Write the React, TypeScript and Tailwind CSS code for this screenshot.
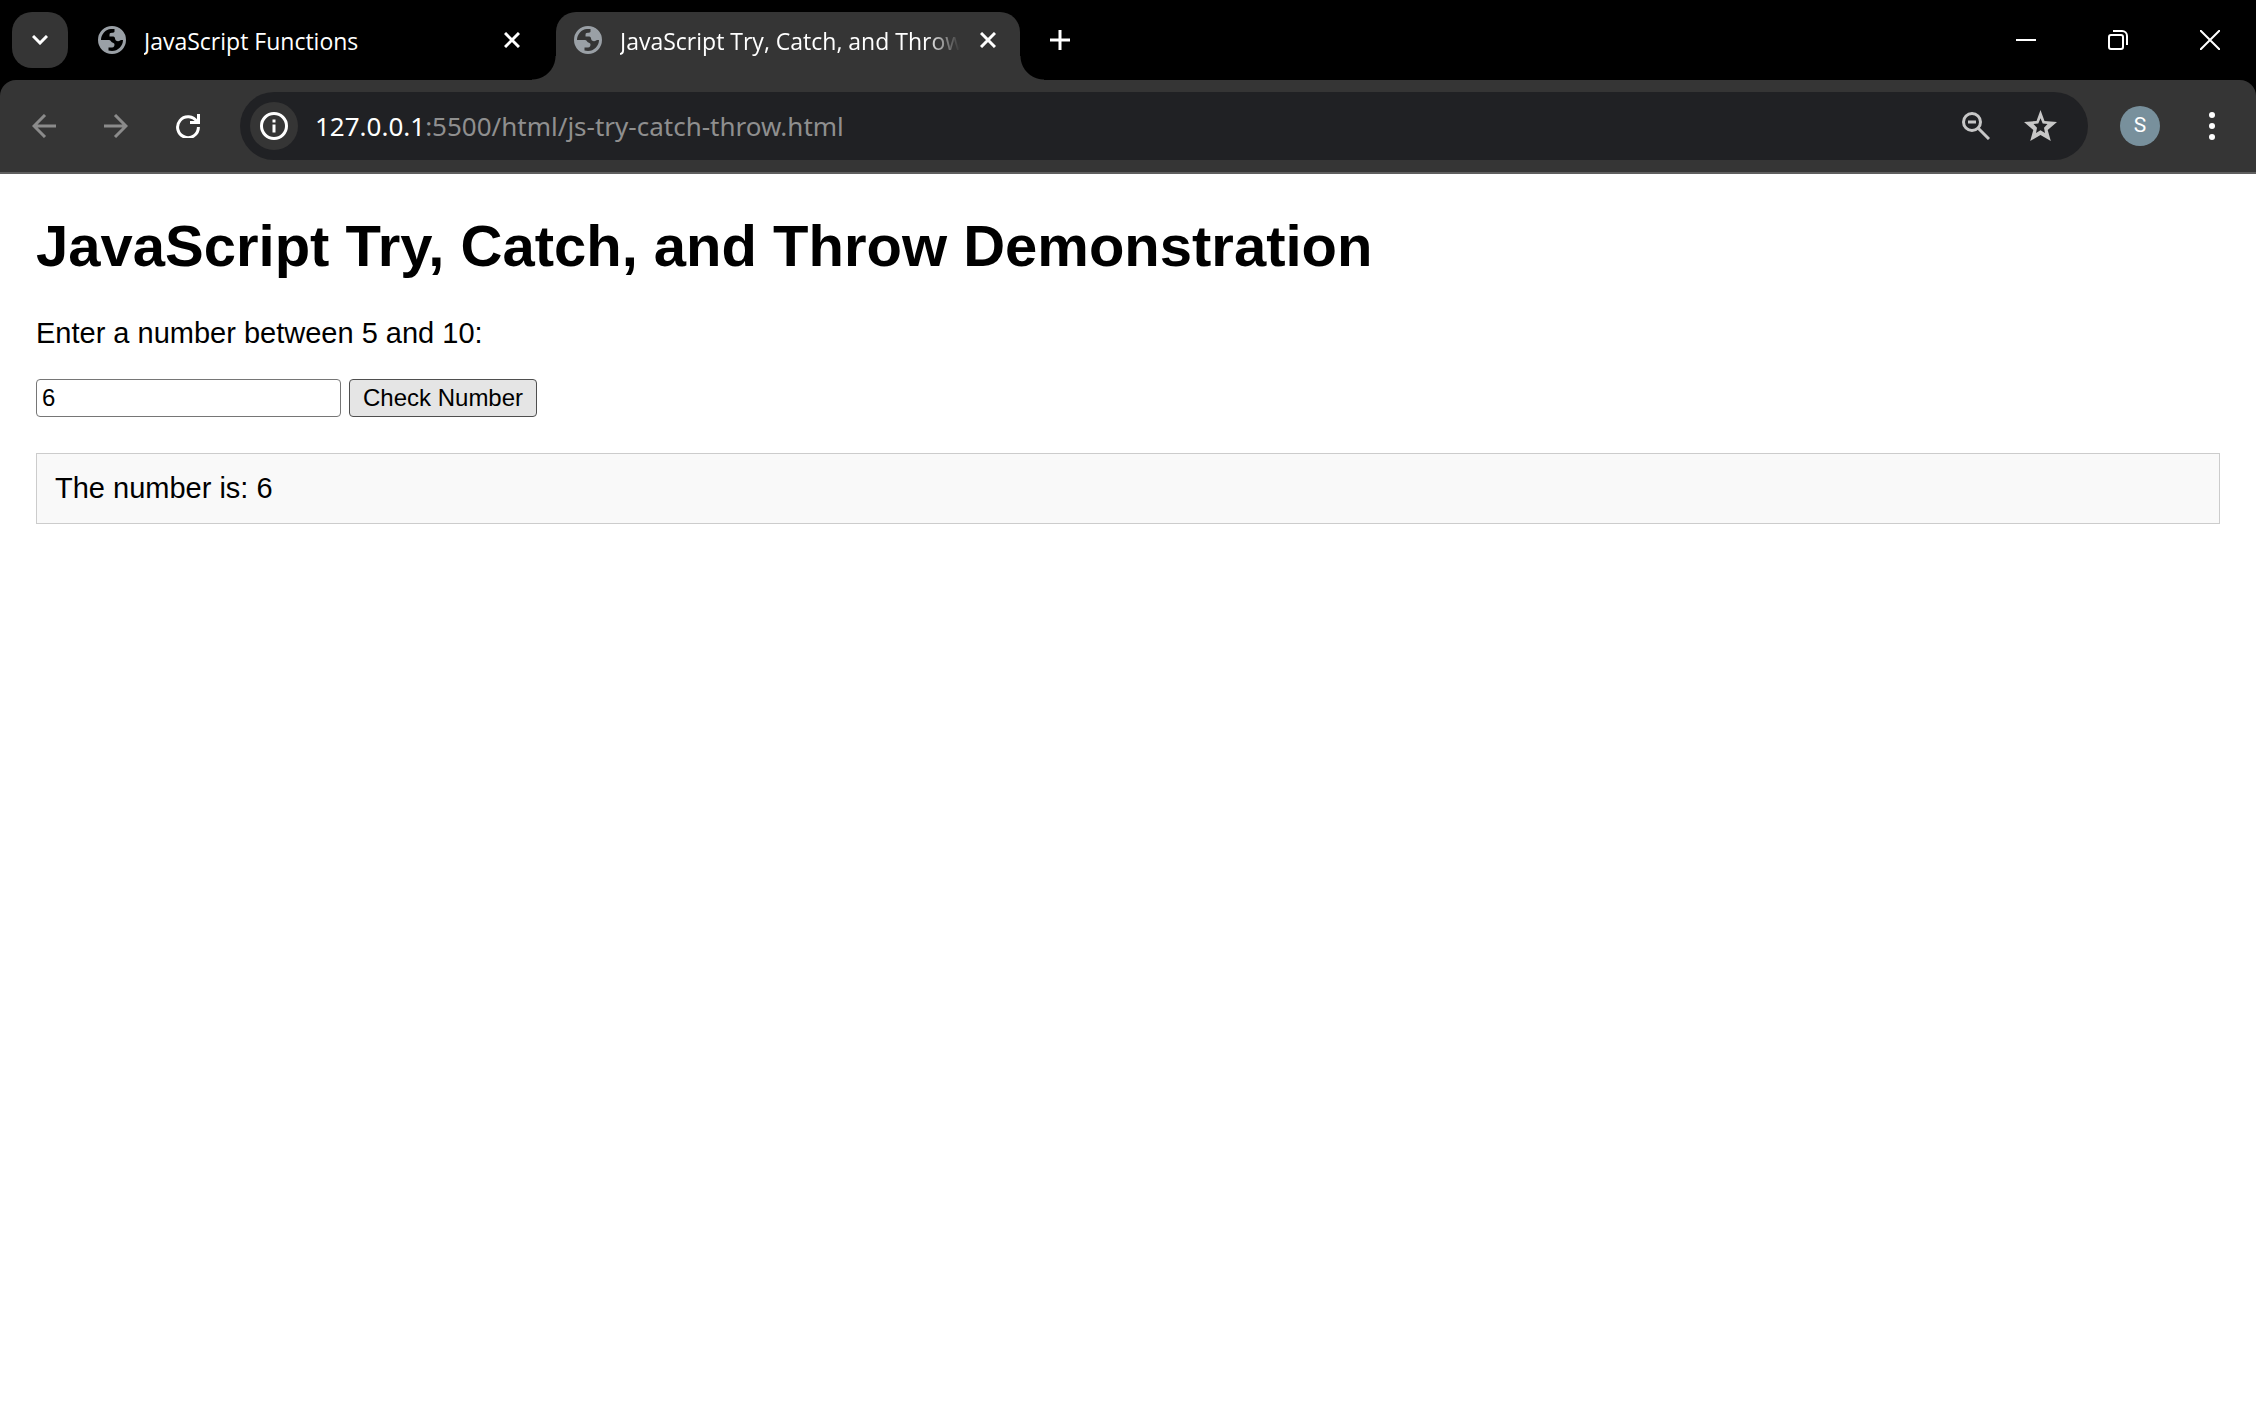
import { useState, type ReactNode } from "react";

function Globe() {
  return (
    <svg viewBox="0 0 28 28" className="size-7 shrink-0" fill="#9aa0a6" aria-hidden="true">
      <path
        fillRule="evenodd"
        d="M14 0a14 14 0 1 0 0 28a14 14 0 0 0 0-28zM3 14C3 8.500 7.500 3.200 13 3H16.500V5.500C16.500 7 14 6.700 12.500 7C11.500 7.300 11.500 8 11.500 10.500H14.500C17 10.500 17 12 17.300 13.500C17.800 15.500 21 15.500 22 14.500C22.500 14 23.500 14 25 14C25 20 20 25 14 25C12.500 25 11.500 24.800 10.500 24.500V21.500H14C16 21.500 16.500 20 16.500 18.500C16.500 17 14.500 17 13.500 16C12.700 15 12.700 14 11 14H3z"
      />
    </svg>
  );
}

function CloseTab({ label }: { label: string }) {
  return (
    <button type="button" aria-label={label} className="grid size-8 shrink-0 place-items-center">
      <svg viewBox="0 0 16 16" className="size-4" stroke="#fff" strokeWidth="3" aria-hidden="true">
        <path d="M1 1L15 15M15 1L1 15" />
      </svg>
    </button>
  );
}

function IconButton({ label, children }: { label: string; children: ReactNode }) {
  return (
    <button type="button" aria-label={label} className="grid size-14 shrink-0 place-items-center">
      {children}
    </button>
  );
}

function WindowButton({ label, children }: { label: string; children: ReactNode }) {
  return (
    <button type="button" aria-label={label} className="grid h-20 w-[92px] place-items-center">
      <svg viewBox="0 0 20 20" className="size-5" fill="none" stroke="#fff" strokeWidth="2" aria-hidden="true">
        {children}
      </svg>
    </button>
  );
}

function TabStrip() {
  return (
    <div className="flex h-20 items-end bg-black text-[23px] text-white">
      <div className="flex h-20 min-w-0 items-center pl-3">
        <button
          type="button"
          aria-label="Search tabs"
          className="grid size-14 place-items-center rounded-[20px] bg-[#353535]"
        >
          <svg viewBox="0 0 16 10" className="h-[10px] w-4" fill="none" stroke="#fff" strokeWidth="3" aria-hidden="true">
            <path d="M1 1L8 8L15 1" />
          </svg>
        </button>
        <div className="ml-[30px] flex w-[430px] items-center">
          <Globe />
          <span className="ml-[18px] flex-1 truncate pt-[2px]">JavaScript Functions</span>
          <CloseTab label="Close JavaScript Functions" />
        </div>
      </div>
      <div className="ml-1 h-6 w-6 bg-[radial-gradient(circle_at_0_0,transparent_23px,#353535_24px)]" />
      <div className="flex h-[68px] w-[464px] items-center rounded-t-[20px] bg-[#353535] pr-4 pb-3 pl-[18px]">
        <Globe />
        <span className="ml-[18px] flex-1 overflow-hidden pt-[2px] whitespace-nowrap [mask-image:linear-gradient(to_right,#000_90%,transparent)]">
          JavaScript Try, Catch, and Throw
        </span>
        <span className="ml-3">
          <CloseTab label="Close JavaScript Try, Catch, and Throw" />
        </span>
      </div>
      <div className="h-6 w-6 bg-[radial-gradient(circle_at_100%_0,transparent_23px,#353535_24px)]" />
      <button type="button" aria-label="New tab" className="mr-auto grid h-20 w-8 place-items-center">
        <svg viewBox="0 0 20 20" className="size-5" stroke="#fff" strokeWidth="3" aria-hidden="true">
          <path d="M10 0V20M0 10H20" />
        </svg>
      </button>
      <WindowButton label="Minimize">
        <path d="M0 10H20" />
      </WindowButton>
      <WindowButton label="Restore">
        <rect x="1" y="5" width="14" height="14" rx="2" />
        <path d="M5 1H14A5 5 0 0 1 19 6V15" />
      </WindowButton>
      <WindowButton label="Close">
        <path d="M0 0L20 20M20 0L0 20" />
      </WindowButton>
    </div>
  );
}

function Toolbar() {
  return (
    <div className="bg-black">
      <div className="flex h-[94px] items-center rounded-t-2xl border-b-2 border-[#5f5f5f] bg-[#353535] px-4">
        <div className="flex gap-4">
          <IconButton label="Back">
            <svg viewBox="0 0 24 24" className="size-6" fill="none" stroke="#8b8b8b" strokeWidth="3" aria-hidden="true">
              <path d="M24 12H2M13 1L2 12L13 23" />
            </svg>
          </IconButton>
          <IconButton label="Forward">
            <svg viewBox="0 0 24 24" className="size-6" fill="none" stroke="#8b8b8b" strokeWidth="3" aria-hidden="true">
              <path d="M0 12H22M11 1L22 12L11 23" />
            </svg>
          </IconButton>
          <IconButton label="Reload">
            <svg viewBox="0 0 24 24" className="size-6" fill="none" stroke="#fff" strokeWidth="3" aria-hidden="true">
              <path d="M22.500 0V8.500H14M21 8A10.400 10.400 0 1 0 22.400 13" />
            </svg>
          </IconButton>
        </div>
        <div className="ml-6 flex h-[68px] min-w-0 flex-1 items-center rounded-full bg-[#202124] pr-4 pl-[10px]">
          <button
            type="button"
            aria-label="View site information"
            className="grid size-12 place-items-center rounded-full bg-[#353535]"
          >
            <svg viewBox="0 0 28 28" className="size-7" fill="none" stroke="#fff" strokeWidth="3" aria-hidden="true">
              <circle cx="14" cy="14" r="12.500" />
              <path d="M14 12.500V20.500M14 7.500V10.500" />
            </svg>
          </button>
          <div className="ml-[17px] flex-1 truncate font-['Noto_Sans',sans-serif] text-[26px] text-[#8f8f8f]">
            <span className="text-white">127.0.0.1</span>:5500/html/js-try-catch-throw.html
          </div>
          <button type="button" aria-label="Zoom" className="grid size-16 place-items-center">
            <svg viewBox="0 0 28 28" className="size-7" fill="none" stroke="#c7c7c7" strokeWidth="3" aria-hidden="true">
              <circle cx="10" cy="10" r="8.500" />
              <path d="M16 16L27 27M6 10H14" />
            </svg>
          </button>
          <button type="button" aria-label="Bookmark this tab" className="grid size-16 place-items-center">
            <svg viewBox="0 0 33 33" className="size-[33px]" fill="#c7c7c7" aria-hidden="true">
              <path
                fillRule="evenodd"
                d="M16.500 0L20.500 11L33 12L23.700 20L26.800 31L16.500 25L6.200 31L9.300 20L0 12L12.500 11zM16.500 8.300L14.300 13.500L9.500 14L13 17.700L12 23L16.500 20.200L21 23L20 17.700L23.500 14L18.700 13.500z"
              />
            </svg>
          </button>
        </div>
        <button
          type="button"
          aria-label="Profile"
          className="mr-6 ml-8 grid size-10 place-items-center rounded-full bg-[#78909c] font-[Roboto] text-[21px] text-white"
        >
          S
        </button>
        <IconButton label="Menu">
          <svg viewBox="0 0 6 28" className="h-7 w-[6px]" fill="#fff" aria-hidden="true">
            <circle cx="3" cy="3" r="3" />
            <circle cx="3" cy="14" r="3" />
            <circle cx="3" cy="25" r="3" />
          </svg>
        </IconButton>
      </div>
    </div>
  );
}

function Page() {
  const [value, setValue] = useState("6");
  const [result, setResult] = useState("The number is: 6");

  const check = () => {
    try {
      const n = Number(value);
      if (value.trim() === "") throw "Input is empty";
      if (Number.isNaN(n)) throw "Input is not a number";
      if (n < 5) throw "Number is too low";
      if (n > 10) throw "Number is too high";
      setResult(`The number is: ${n}`);
    } catch (err) {
      setResult(`Error: ${err}`);
    }
  };

  return (
    <main className="px-9 pt-[39px] font-['Liberation_Sans',Arial,sans-serif] text-[29px] leading-8 text-black">
      <h1 className="text-[58px] leading-[66px] font-bold">JavaScript Try, Catch, and Throw Demonstration</h1>
      <label htmlFor="number" className="mt-[38px] block">
        Enter a number between 5 and 10:
      </label>
      <div className="mt-[30px] flex gap-2 text-[24px]">
        <input
          id="number"
          type="text"
          value={value}
          onChange={(e) => setValue(e.target.value)}
          className="h-[38px] w-[305px] rounded-[4px] border border-[#767676] bg-white px-[5px]"
        />
        <button
          type="button"
          onClick={check}
          className="h-[38px] rounded-[4px] border border-[#4f4f4f] bg-[#e5e5e5] px-[13px]"
        >
          Check Number
        </button>
      </div>
      <p className="mt-9 border border-[#ccc] bg-[#f9f9f9] px-[18px] py-[18px] leading-[33px]">{result}</p>
    </main>
  );
}

export default function App() {
  return (
    <div className="min-h-screen bg-white font-['Segoe_UI','Open_Sans',sans-serif]">
      <TabStrip />
      <Toolbar />
      <Page />
    </div>
  );
}
